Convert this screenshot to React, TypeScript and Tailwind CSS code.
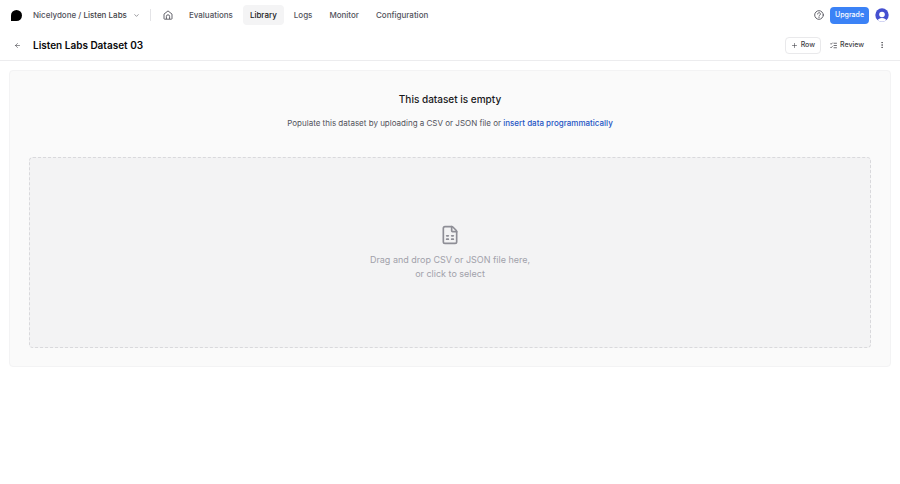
import React from 'react';
import { ArrowLeft, ChevronDown, EllipsisVertical, FileSpreadsheet, Plus } from 'lucide-react';

const links = ['Evaluations', 'Library', 'Logs', 'Monitor', 'Configuration'];

const HomeIcon = () => (
  <svg className="size-[10px]" viewBox="0 0 20 20" fill="none" stroke="currentColor" strokeWidth="1.8" strokeLinejoin="round" aria-hidden="true">
    <path d="M2 8.2 10 1.8l8 6.4V17a1.4 1.4 0 0 1-1.4 1.4H3.4A1.4 1.4 0 0 1 2 17z" />
    <path d="M6.8 18v-5.2a3.2 3.2 0 0 1 6.4 0V18" />
  </svg>
);

const HelpIcon = () => (
  <svg className="size-[10px]" viewBox="0 0 20 20" fill="none" stroke="currentColor" strokeWidth="1.8" strokeLinecap="round" aria-hidden="true">
    <circle cx="10" cy="10" r="8.6" />
    <path d="M7.2 8a2.8 2.8 0 1 1 4.3 2.4c-.9.6-1.5 1-1.5 2" />
    <path d="M10 14.9v.2" strokeWidth="2.2" />
  </svg>
);

const ReviewIcon = () => (
  <svg className="size-[7px]" viewBox="0 0 14 14" fill="none" stroke="currentColor" strokeWidth="1.5" strokeLinecap="round" strokeLinejoin="round" aria-hidden="true">
    <path d="m1 3.4 1.2 1.2L4.6 2M1 10.4l1.2 1.2L4.6 9" />
    <path d="M8 2.5h5M8 7h5M8 11.5h5" />
  </svg>
);

const Avatar = () => (
  <svg className="size-[14px]" viewBox="0 0 28 28" aria-hidden="true">
    <defs>
      <clipPath id="avatar">
        <circle cx="14" cy="14" r="13.4" />
      </clipPath>
    </defs>
    <g clipPath="url(#avatar)">
      <rect width="28" height="28" fill="#444fd0" />
      <circle cx="14" cy="13" r="5.6" fill="#fff" />
      <path d="M4 28c1-6 5-8 10-8s9 2 10 8z" fill="#fff" />
    </g>
  </svg>
);

const TopBar = () => (
  <header className="flex h-[30px] items-center px-[11px]">
    <a href="#" aria-label="Dashboard" className="size-[11px] rounded-t-full rounded-br-full rounded-bl-[2px] bg-black" />
    <button type="button" className="ml-[11px] flex items-center gap-[6px] text-[#52525b]">
      <span>
        Nicelydone / <span className="text-[#3f3f46]">Listen Labs</span>
      </span>
      <ChevronDown className="size-[7px]" aria-hidden="true" />
    </button>
    <div className="ml-[10px] h-3 w-px bg-[#e4e4e7]" />
    <nav className="ml-[6px] flex items-center gap-[3px]">
      <a href="#" aria-label="Home" className="px-[6px] text-[#52525b]">
        <HomeIcon />
      </a>
      {links.map((link) => (
        <a
          key={link}
          href="#"
          className={
            link === 'Library'
              ? 'rounded bg-[#f4f4f5] px-[7px] py-1 text-[#18181b]'
              : 'rounded px-[7px] py-1 text-[#52525b]'
          }
        >
          {link}
        </a>
      ))}
    </nav>
    <div className="ml-auto flex items-center gap-[6px]">
      <button type="button" aria-label="Help" className="text-[#52525b]">
        <HelpIcon />
      </button>
      <button type="button" className="h-[17px] rounded bg-[#3b82f6] px-[5px] text-[7px] text-white">
        Upgrade
      </button>
      <button type="button" aria-label="Account">
        <Avatar />
      </button>
    </div>
  </header>
);

const TitleBar = () => (
  <div className="flex h-[31px] items-center border-b border-[#ececee] px-[14px]">
    <a href="#" aria-label="Back" className="text-[#3f3f46]">
      <ArrowLeft className="size-[7px]" />
    </a>
    <h1 className="ml-3 text-[10px] font-semibold text-[#09090b]">Listen Labs Dataset 03</h1>
    <div className="ml-auto flex items-center text-[7px] text-[#3f3f46]">
      <button type="button" className="flex h-[17px] items-center gap-[3px] rounded border border-[#e9e9eb] px-[5px]">
        <Plus className="size-[7px]" aria-hidden="true" />
        Row
      </button>
      <button type="button" className="ml-[9px] flex items-center gap-[3px]">
        <ReviewIcon />
        Review
      </button>
      <button type="button" aria-label="More" className="ml-[14px]">
        <EllipsisVertical className="size-[8px]" />
      </button>
    </div>
  </div>
);

const App = () => {
  return (
    <div className="min-h-screen bg-white font-['Inter',sans-serif] text-[8px] leading-[12px] font-medium">
      <TopBar />
      <TitleBar />
      <main className="mx-[9px] mt-[9px] rounded border border-[#f3f3f4] bg-[#fafafa] px-[19px] pt-[21px] pb-[18px] text-center">
        <h2 className="text-[10px] leading-[14px] text-[#18181b]">This dataset is empty</h2>
        <p className="mt-[11px] font-normal text-[#52525b]">
          Populate this dataset by uploading a CSV or JSON file or{' '}
          <a href="#" className="font-medium text-[#2454c4]">
            insert data programmatically
          </a>
        </p>
        <label className="mt-7 flex h-[191px] cursor-pointer flex-col items-center justify-center rounded border border-dashed border-[#d9d9dc] bg-[#f3f3f4] text-[9px] leading-[14px] font-normal text-[#a1a1aa]">
          <input type="file" accept=".csv,.json" className="sr-only" />
          <FileSpreadsheet className="mb-2 size-5 text-[#8e8e96]" aria-hidden="true" />
          <span>
            Drag and drop CSV or JSON file here,
            <br />
            or click to select
          </span>
        </label>
      </main>
    </div>
  );
};

export default App;
